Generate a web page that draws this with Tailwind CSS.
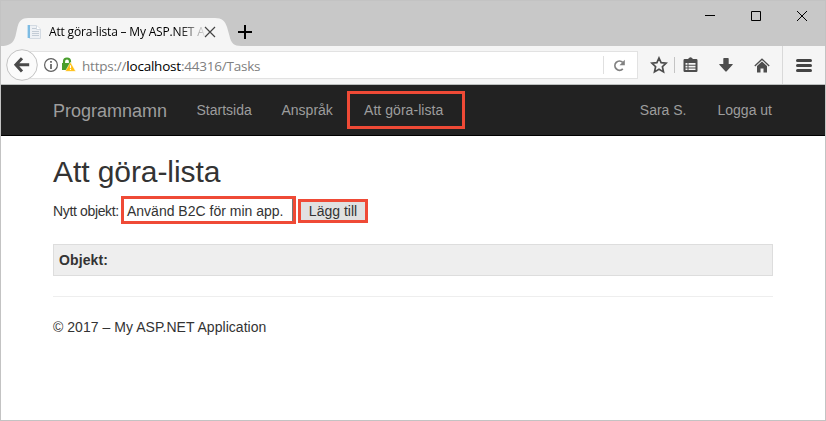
<!DOCTYPE html>
<html lang="sv">
<head>
<meta charset="utf-8">
<title>Att göra-lista – My ASP.NET Application</title>
<script src="https://cdn.jsdelivr.net/npm/@tailwindcss/browser@4"></script>
</head>
<body class="bg-white">
<div class="flex h-[421px] w-[826px] flex-col overflow-hidden border border-[#c3c3c3] bg-white font-['Liberation_Sans',Arial,sans-serif] text-[#333]">

  <!-- Title bar -->
  <div class="flex h-[45px] shrink-0 items-end bg-[#c8c8c8]">
    <div class="relative h-7 w-[240px]">
      <svg class="absolute inset-0" width="240" height="28" viewBox="0 0 240 28"><path fill="#f5f5f5" d="M0 28C8 28 12.500 25.500 14.500 18L16.500 9C18 3 21 0 27 0H214C221 0 224 3 226 9L228.500 18C230 25 233 28 240 28Z"/></svg>
      <div class="relative flex h-full items-center pl-[25px]">
        <svg width="16" height="16" viewBox="0 0 16 16"><path fill="#eef1f5" stroke="#d3dae2" d="M3.500 1.500h7l4 3.500v9.500h-11z"/><path fill="#7dbbe2" d="M1 1h3v13H1z"/><path fill="#c4e0f2" d="M1 1h1v13H1z"/><path fill="none" stroke="#c3ccd6" d="M6 4.500h4M6 7.500h7M6 9.500h7M6 11.500h7"/><path fill="#fff" stroke="#d3dae2" d="M10.500 1.500v4h4"/></svg>
        <div class="ml-[7px] w-[158px] bg-linear-to-r from-black from-82% to-transparent to-100% bg-clip-text font-['Open_Sans','Noto_Sans',sans-serif] text-[12px] leading-4 tracking-[-0.18px] whitespace-nowrap text-transparent">Att göra-lista – My ASP.NET A</div>
        <svg class="-ml-[3px]" width="12" height="12" viewBox="0 0 12 12"><path fill="none" stroke="#444" stroke-width="1.200" d="M1 1l10 10M11 1L1 11"/></svg>
      </div>
    </div>
    <svg class="mb-[7px] -ml-[3px]" width="14" height="14" viewBox="0 0 14 14"><path stroke="#000" stroke-width="2" d="M7 0v14M0 7h14"/></svg>
    <div class="ml-auto flex self-start pt-[9px] pr-[17px]">
      <svg width="104" height="12" viewBox="0 0 104 12" fill="none" stroke="#000"><path d="M1 5.500h10M47.500 1.500h9v9h-9zM93 1l10 10M103 1L93 11"/></svg>
    </div>
  </div>

  <!-- Toolbar -->
  <div class="flex h-[38px] shrink-0 items-center bg-[#f5f5f5] text-[#4d4d4d]">
    <svg class="relative z-10 ml-[5px] shrink-0" width="32" height="32" viewBox="0 0 32 32"><circle cx="16" cy="16" r="15.300" fill="#fbfbfb" stroke="#c2c2c2"/><path fill="none" stroke="#4a4a4a" stroke-width="3" d="M16 9.200L9.900 15.800L16 22.400M10 15.800H23.200"/></svg>
    <div class="-ml-4 flex h-7 w-[616px] items-center border border-[#e2e2e2] bg-white pl-[20px]">
      <svg width="16" height="16" viewBox="0 0 16 16"><circle cx="8" cy="8" r="6.400" fill="none" stroke="#606060" stroke-width="1.200"/><path fill="#555" d="M7.200 4h1.600v1.700H7.200zM7.200 7h1.600v5H7.200z"/></svg>
      <svg class="ml-px" width="16" height="16" viewBox="0 0 16 16"><path fill="none" stroke="#4a9e2d" stroke-width="2.200" d="M4 8V4.500a3 3 0 0 1 6 0v2"/><path fill="#4a9e2d" d="M2 6h9v7H2z"/><path fill="#ffbe0c" stroke="#fff" stroke-width=".5" d="M10.500 5.200L15.700 14.300H5.300Z"/><path stroke="#fff" stroke-width="1.200" d="M10.500 8.200v3M10.500 12v1.100"/></svg>
      <div class="ml-[6px] translate-y-px font-['Open_Sans','Noto_Sans',sans-serif] text-[13.5px] leading-5 tracking-[-0.22px] text-[#808080]">https://<span class="text-black">localhost</span>:44316/Tasks</div>
      <div class="ml-auto flex h-[18px] w-[34px] items-center border-l border-[#e0e0e0] pl-[9px]">
        <svg width="13" height="13" viewBox="0 0 13 13"><path fill="none" stroke="#818181" stroke-width="1.800" d="M9.800 9.900A4.600 4.600 0 1 1 9.700 3.300"/><path fill="#818181" d="M11.800.7v5.500H6.500z"/></svg>
      </div>
    </div>
    <svg class="ml-[12px]" width="18" height="18" viewBox="0 0 18 18"><path fill="none" stroke="#4d4d4d" stroke-width="1.700" d="M9 2L11.100 6.700L16.100 7.200L12.400 10.700L13.500 15.900L9 13.300L4.500 15.900L5.600 10.700L1.900 7.200L6.900 6.700Z"/></svg>
    <div class="ml-[6px] h-4 w-px bg-[#c4c4c4]"></div>
    <svg class="ml-[8px]" width="15" height="16" viewBox="0 0 15 16"><path fill="#4d4d4d" d="M5 2Q7.500-1.500 10 2h3.300q1.200 0 1.200 1.200v10.600q0 1.200-1.200 1.200H1.700Q.5 15 .5 13.800V3.200Q.5 2 1.700 2z"/><path fill="#f5f5f5" d="M2.500 6h2v1.700h-2zM5.500 6h7v1.700h-7zM2.500 8.700h2v1.700h-2zM5.500 8.700h7v1.700h-7zM2.500 11.400h2v1.700h-2zM5.500 11.400h7v1.700h-7z"/></svg>
    <svg class="ml-[21px]" width="14" height="14" viewBox="0 0 14 14"><path fill="#4d4d4d" d="M4.300.7Q4.300 0 5 0h4q.7 0 .7.700V6h3.600q.9 0 .3.800L7.700 13.300q-.7.700-1.400 0L.4 6.800Q-.2 6 .7 6h3.600z"/></svg>
    <svg class="ml-[21px]" width="16" height="15" viewBox="0 0 16 15"><path fill="none" stroke="#4d4d4d" stroke-width="1.300" d="M.8 7.900L8 1.200L15.200 7.900"/><path fill="#4d4d4d" d="M3 8L8 3.400L13 8v6.500H9.500v-4h-3v4H3z"/></svg>
    <div class="ml-[12px] h-full w-px bg-[#d9d9d9]"></div>
    <div class="ml-[13px] flex w-4 flex-col gap-0.5">
      <div class="h-[3px] rounded-full bg-[#444]"></div><div class="h-[3px] rounded-full bg-[#444]"></div><div class="h-[3px] rounded-full bg-[#444]"></div>
    </div>
  </div>

  <!-- Site navigation -->
  <nav class="flex h-[52px] shrink-0 items-center border-t border-b border-t-[#bcbfbe] border-b-black bg-[#222] pr-[53px] pl-[52px] text-[14px] text-[#9d9d9d]">
    <span class="w-[143.5px] pt-0.5 text-[18px] leading-5">Programnamn</span>
    <span class="w-[85px]">Startsida</span>
    <span class="w-[65.5px]">Anspråk</span>
    <span class="flex h-[38px] w-[118px] items-center border-3 border-[#ef4a36] pl-[14px] tracking-[0.05px]">Att göra-lista</span>
    <span class="ml-auto mr-[31px]">Sara S.</span>
    <span>Logga ut</span>
  </nav>

  <!-- Page content -->
  <main class="px-[52px] pt-[19px] text-[14px]">
    <h2 class="text-[30px] leading-[33px] tracking-[-0.08px]">Att göra-lista</h2>
    <div class="mt-2 flex h-7 items-center">
      <span class="w-[68px] pt-0.5 tracking-[-0.35px] whitespace-nowrap">Nytt objekt:</span>
      <div class="flex h-7 w-[175px] items-center border-3 border-[#ef4a36] pt-0.5 pl-[3px] shadow-[inset_-1px_0_0_#777] whitespace-nowrap">Använd B2C för min app.</div>
      <div class="mt-0.5 ml-[2px] flex h-6 w-[70px] items-center justify-center border-3 border-[#ef4a36] bg-[#e1e1e1]">Lägg till</div>
    </div>
    <div class="mt-5 flex h-8 items-center border border-[#ddd] bg-[#eee] pl-[5px] font-bold tracking-[0.1px]">Objekt:</div>
    <hr class="mt-5 border-[#eee]">
    <p class="mt-5 leading-5 tracking-[0.04px]">© 2017 – My ASP.NET Application</p>
  </main>
</div>
</body>
</html>
